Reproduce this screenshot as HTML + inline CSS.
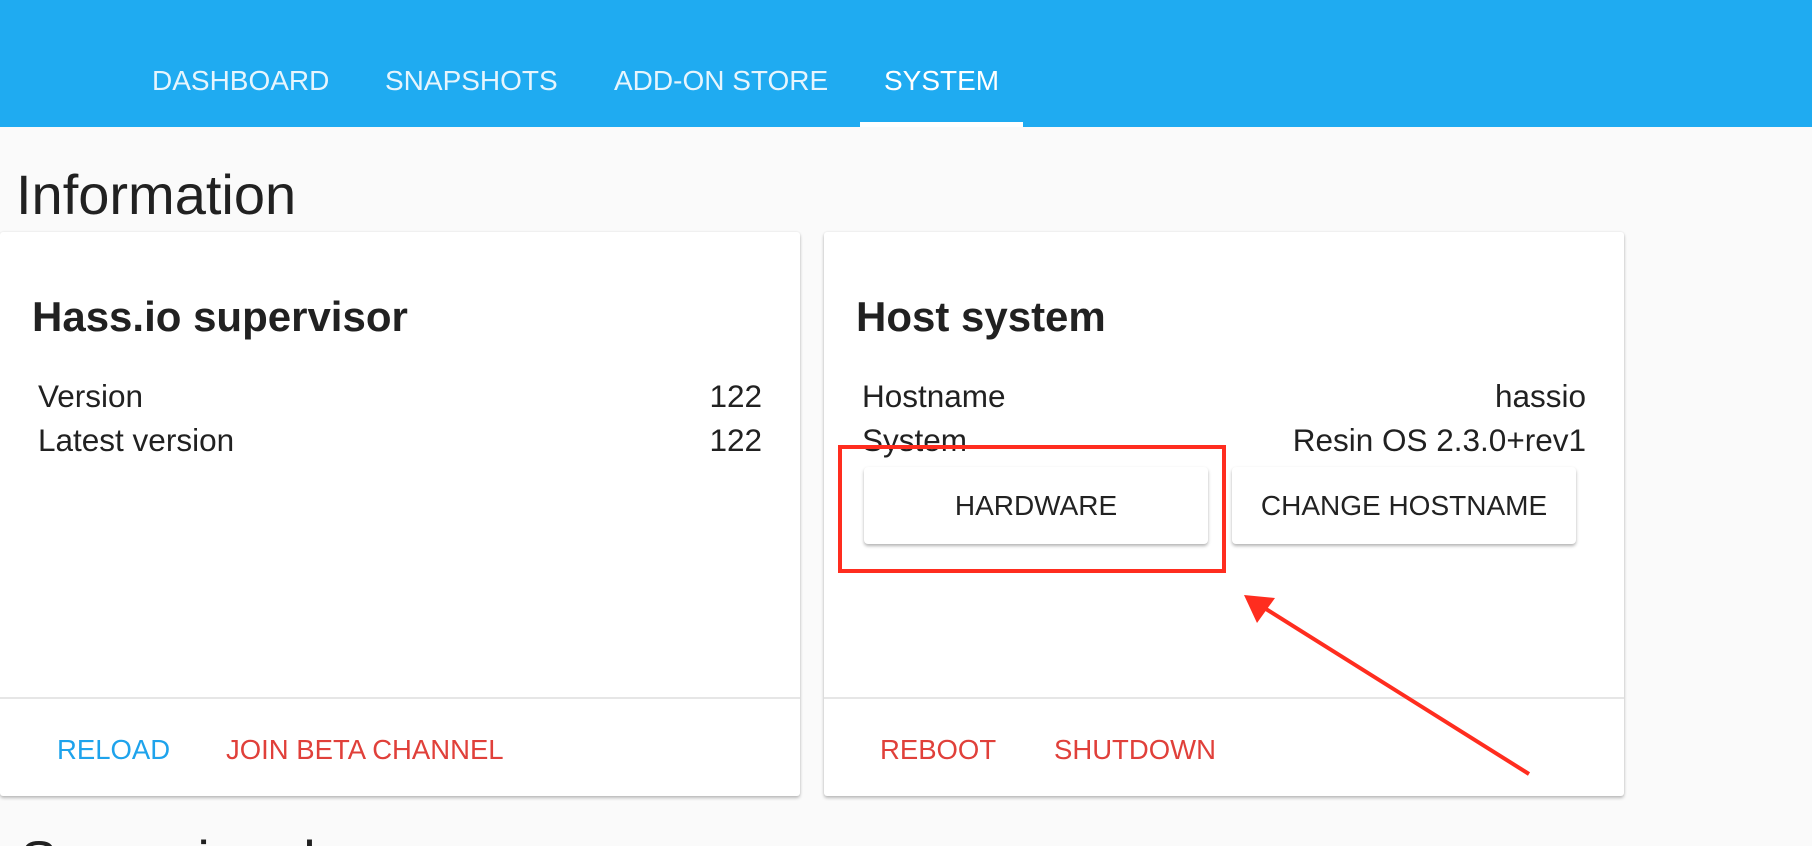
<!DOCTYPE html>
<html><head><meta charset="utf-8"><style>
*{margin:0;padding:0;box-sizing:border-box}
html,body{width:1812px;height:846px;overflow:hidden;background:#fafafa}
body{font-family:"Liberation Sans",Arial,sans-serif;color:#212121}
#w{position:relative;width:1812px;height:846px;overflow:hidden}
.hdr{position:absolute;left:0;top:0;width:1812px;height:127px;background:#1fabf1}
.tab{position:absolute;top:63px;font-size:28px;color:#e6f5fd;line-height:36px}
.ul{position:absolute;left:860px;top:122px;width:163px;height:5px;background:#fff}
.h1{position:absolute;left:16px;top:162px;font-size:56px;line-height:66px;color:#212121}
.card{position:absolute;top:232px;width:800px;height:564px;background:#fff;border-radius:3px;box-shadow:0 2px 3px rgba(0,0,0,.25),0 0 2px rgba(0,0,0,.08)}
.ct{position:absolute;left:32px;font-size:42px;font-weight:bold;line-height:50px}
.row{position:absolute;font-size:31.5px;line-height:38px}
.div{position:absolute;left:0;top:465px;width:800px;height:2px;background:#e6e6e6}
.fb{position:absolute;top:500px;font-size:27.5px;line-height:36px}
.btn{position:absolute;top:467px;width:344px;height:77px;background:#fff;border-radius:4px;box-shadow:0 2px 3px rgba(0,0,0,.3);font-size:28px;line-height:77px;text-align:center;color:#222}
</style></head><body><div id="w">
<div class="hdr">
<div class="tab" style="left:152px">DASHBOARD</div>
<div class="tab" style="left:385px">SNAPSHOTS</div>
<div class="tab" style="left:614px">ADD-ON STORE</div>
<div class="tab" style="left:884px;color:#fff">SYSTEM</div>
<div class="ul"></div>
</div>
<div class="h1">Information</div>
<div class="card" style="left:0">
<div class="ct" style="top:60px">Hass.io supervisor</div>
<div class="row" style="left:38px;top:145px">Version</div>
<div class="row" style="right:38px;top:145px">122</div>
<div class="row" style="left:38px;top:189px">Latest version</div>
<div class="row" style="right:38px;top:189px">122</div>
<div class="div"></div>
<div class="fb" style="left:57px;color:#1ea3ec">RELOAD</div>
<div class="fb" style="left:226px;color:#e0403a">JOIN BETA CHANNEL</div>
</div>
<div class="card" style="left:824px">
<div class="ct" style="top:60px">Host system</div>
<div class="row" style="left:38px;top:145px">Hostname</div>
<div class="row" style="right:38px;top:145px">hassio</div>
<div class="row" style="left:38px;top:189px">System</div>
<div class="row" style="right:38px;top:189px">Resin OS 2.3.0+rev1</div>
<div class="div"></div>
<div class="fb" style="left:56px;color:#e0403a">REBOOT</div>
<div class="fb" style="left:230px;color:#e0403a">SHUTDOWN</div>
</div>
<div class="btn" style="left:864px">HARDWARE</div>
<div class="btn" style="left:1232px">CHANGE HOSTNAME</div>
<div class="h1" style="left:20px;top:828px">Supervisor log</div>
<svg style="position:absolute;left:0;top:0" width="1812" height="846">
<rect x="840" y="447" width="384" height="124" fill="none" stroke="#ff2d1f" stroke-width="4"/>
<line x1="1529" y1="774" x2="1258" y2="604" stroke="#ff2d1f" stroke-width="4"/>
<polygon points="1244,595 1275,598 1257,623" fill="#ff2d1f"/>
</svg>
</div></body></html>
